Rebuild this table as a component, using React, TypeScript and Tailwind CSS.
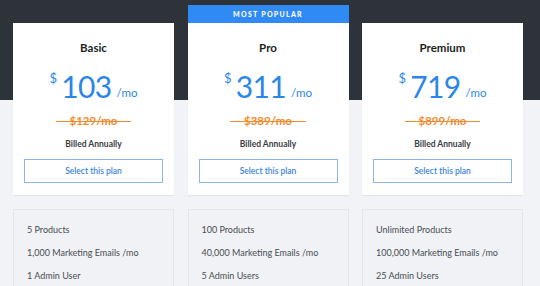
import React from 'react';

const plans = [
  {
    name: 'Basic',
    price: '103',
    old: '$129/mo',
    features: ['5 Products', '1,000 Marketing Emails /mo', '1 Admin User'],
  },
  {
    name: 'Pro',
    price: '311',
    old: '$389/mo',
    popular: true,
    features: ['100 Products', '40,000 Marketing Emails /mo', '5 Admin Users'],
  },
  {
    name: 'Premium',
    price: '719',
    old: '$899/mo',
    features: ['Unlimited Products', '100,000 Marketing Emails /mo', '25 Admin Users'],
  },
];

export default function App() {
  return (
    <div
      className="w-[540px] h-[286px] overflow-hidden bg-[linear-gradient(to_bottom,#2e3239_0,#2e3239_100px,#f1f3f6_100px)]"
      style={{ fontFamily: 'Lato, "Open Sans", sans-serif' }}
    >
      <div className="grid grid-cols-[161px_161px_161px] gap-x-[13.5px] pl-[13px] pt-[5px]">
        {plans.map((plan) => (
          <div key={plan.name} className="flex flex-col">
            {/* header strip, only the popular plan shows it */}
            {plan.popular ? (
              <div className="h-[18px] bg-[#2f8af3] flex items-center justify-center text-white text-[7px] font-black tracking-[0.18em]">
                MOST POPULAR
              </div>
            ) : (
              <div className="h-[18px]" />
            )}
            <div className="h-[172px] bg-white shadow-[0_1px_1px_rgba(0,0,0,0.06)] flex flex-col items-center pt-[18px]">
              <h3 className="text-[11.5px] font-bold text-[#1d1f22] leading-[14px]">{plan.name}</h3>
              <div className="flex items-start mt-[16px] text-[#2c86e8] h-[30px]">
                <span className="text-[13px] leading-none mt-[1px] mr-[4px]">$</span>
                <span className="text-[30px] font-normal leading-[30px] tracking-[-0.02em]">{plan.price}</span>
                <span className="text-[11.5px] leading-none mt-[16px] ml-[5px]">/mo</span>
              </div>
              <div className="relative mt-[13px] px-[14px]">
                <span className="text-[11.5px] font-bold text-[#f08a2c] leading-[14px] block">{plan.old}</span>
                <span className="absolute left-0 right-0 top-[7px] h-px bg-[#f08a2c]" />
              </div>
              <p className="mt-[10px] text-[8.5px] font-bold text-[#3a3d42] leading-[12px]">Billed Annually</p>
              <button className="mt-[9px] w-[139px] h-[24px] border border-[#8db6e6] text-[#3a85dc] text-[8.5px] font-semibold">
                Select this plan
              </button>
            </div>
            <div className="mt-[14px] h-[100px] bg-[#f0f2f5] border border-[#e2e5e9] pl-[13px] pt-[14px] flex flex-col gap-[12px]">
              {plan.features.map((f) => (
                <p key={f} className="text-[9px] text-[#4a4d52] leading-[11px]">
                  {f}
                </p>
              ))}
            </div>
          </div>
        ))}
      </div>
    </div>
  );
}
